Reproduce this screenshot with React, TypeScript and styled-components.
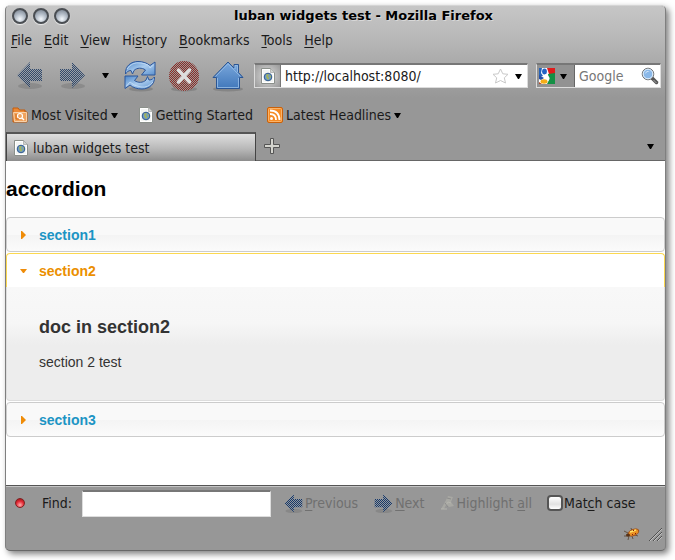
import React, { useState } from "react";
import styled, { createGlobalStyle } from "styled-components";

const GlobalStyle = createGlobalStyle`
  *, *::before, *::after { box-sizing: border-box; }
  body { margin: 0; background: #fff; }
  button, input { font: inherit; color: inherit; margin: 0; }
`;

const Page = styled.div`
  display: flex;
  min-height: 100vh;
  padding: 5px 9px 9px 5px;
  font: 14px/18px "DejaVu Sans Condensed", "DejaVu Sans", sans-serif;
  color: #1a1a1a;
`;

const Window = styled.div`
  flex: 1;
  min-width: 0;
  display: flex;
  flex-direction: column;
  border: 1px solid #7f7f7f;
  border-top-color: #d5d5d5;
  border-bottom-color: #686868;
  border-radius: 5px;
  background: #979797;
  box-shadow: 3px 3px 6px rgba(0, 0, 0, 0.5);
  white-space: nowrap;
`;

const Chrome = styled.header`
  border-radius: 4px 4px 0 0;
  background: linear-gradient(#c6c6c6 0, #b9b9b9 30px, #979797 92px);
`;

const TitleBar = styled.div`
  display: flex;
  align-items: center;
  height: 20px;
  padding: 0 8px 0 6px;
`;

const WindowButtons = styled.div`
  display: flex;
  gap: 5px;
`;

const WindowButton = styled.button`
  width: 16px;
  height: 16px;
  padding: 0;
  border: 2px solid #4a4e53;
  border-radius: 50%;
  background: radial-gradient(circle at 50% 75%, #f4f8fc 0, #b5bec9 45%, #707a87 100%);
  box-shadow: 0 1px 1px #eee;
`;

const Title = styled.h1`
  flex: 1;
  margin: 0;
  text-align: center;
  font-family: "DejaVu Sans", sans-serif;
  font-size: 13px;
  line-height: 20px;
  font-weight: bold;
  color: #000;
  text-shadow: 1px 1px 0 #d8d8d8;
`;

const MenuBar = styled.nav`
  display: flex;
  gap: 12px;
  height: 27px;
  align-items: center;
  padding-left: 5px;
`;

const PlainButton = styled.button`
  display: flex;
  align-items: center;
  flex: none;
  padding: 0;
  border: 0;
  background: none;
  white-space: pre;
`;

const MenuButton = styled(PlainButton)`
  display: block;
`;

const Key = styled.span`
  text-decoration: underline;
  text-decoration-thickness: 1px;
  text-underline-offset: 2px;
`;

const Toolbar = styled.div`
  display: flex;
  align-items: center;
  height: 45px;
  padding: 0 4px 0 10px;
`;

const NavButtons = styled.div<{ $gap: number; $after: number }>`
  display: flex;
  flex: none;
  align-items: center;
  gap: ${(p) => p.$gap}px;
  margin-right: ${(p) => p.$after}px;
`;

const Field = styled.div`
  display: flex;
  align-items: center;
  height: 25px;
  background: #fff;
  border: 1px solid #dcdcdc;
  border-top: 2px solid #777;
  padding-right: 5px;
`;

const LocationField = styled(Field)`
  flex: 1;
  min-width: 0;
  margin-right: 8px;
`;

const SearchField = styled(Field)`
  flex: none;
  width: 125px;
  padding-right: 1px;
`;

const FieldInput = styled.input`
  flex: 1;
  min-width: 0;
  width: 40px;
  padding: 0 4px;
  border: 0;
  outline: 0;
  background: none;
  &::placeholder { color: #777; opacity: 1; }
`;

const SiteBadge = styled.button`
  display: flex;
  align-items: center;
  justify-content: center;
  width: 26px;
  height: 22px;
  padding: 0;
  border: 0;
  border-right: 1px solid #777;
  background: radial-gradient(circle, #ddd, #999);
`;

const AddressList = styled(PlainButton)`
  margin-left: 6px;
`;

const EngineButton = styled.button`
  display: flex;
  align-items: center;
  gap: 5px;
  width: 38px;
  height: 22px;
  padding: 0 0 0 2px;
  border: 0;
  border-right: 1px solid #666;
  background: #929292;
`;

const BookmarkBar = styled.nav`
  display: flex;
  align-items: center;
  gap: 14px;
  height: 34px;
  padding-left: 6px;
`;

const Bookmark = styled.a<{ $menu?: boolean }>`
  display: flex;
  align-items: center;
  gap: 3px;
  padding-right: ${(p) => (p.$menu ? "7px" : "0")};
  color: #1a1a1a;
  text-decoration: none;
`;

const TabBar = styled.div`
  display: flex;
  align-items: stretch;
  height: 29px;
  border-bottom: 1px solid #666;
`;

const Tab = styled.button`
  display: flex;
  align-items: center;
  gap: 5px;
  width: 250px;
  height: 29px;
  padding: 0 7px;
  border: 1px solid #444;
  border-top: 2px solid #555;
  border-bottom: 0;
  background: linear-gradient(#dedede, #b8b8b8 55%, #8d8d8d);
`;

const NewTab = styled(PlainButton)`
  margin-left: 8px;
`;

const TabList = styled(PlainButton)`
  margin-left: auto;
  padding-right: 11px;
`;

const Content = styled.main`
  flex: 1;
  background: #fff;
  font-family: "Liberation Sans", Arial, sans-serif;
  font-size: 14px;
  color: #333;
`;

const Heading = styled.h2`
  margin: 0;
  padding: 14px 0 15px;
  font-size: 21px;
  line-height: 27px;
  color: #000;
`;

const Accordion = styled.div`
  display: grid;
  gap: 1px;
`;

const SectionTitle = styled.h3`
  margin: 0;
  font-size: 14px;
`;

const SectionButton = styled.button<{ $open: boolean }>`
  display: flex;
  align-items: center;
  width: 100%;
  height: ${(p) => (p.$open ? "34px" : "35px")};
  padding: 0 13px;
  gap: 12px;
  border: 1px solid ${(p) => (p.$open ? "#fbd850" : "#ccc")};
  border-bottom-width: ${(p) => (p.$open ? "0" : "1px")};
  border-radius: ${(p) => (p.$open ? "4px 4px 0 0" : "4px")};
  background: ${(p) => (p.$open ? "#fff" : "linear-gradient(#f9f9f9 50%, #f4f4f4 52%, #fbfbfb)")};
  color: ${(p) => (p.$open ? "#eb8f00" : "#1c94c4")};
`;

const SectionBody = styled.div`
  padding: 29px 32px 29px;
  border: 1px solid #ddd;
  border-top: 0;
  border-radius: 0 0 4px 4px;
  background: linear-gradient(#f8f8f8 0, #f6f6f6 36px, #ededed 58px, #ededed 100%);
`;

const DocTitle = styled.h4`
  margin: 0 0 14px;
  font-size: 18px;
  line-height: 23px;
`;

const DocText = styled.p`
  margin: 0;
  line-height: 18px;
`;

const FindBar = styled.div`
  display: flex;
  align-items: center;
  height: 36px;
  padding: 0 8px 1px 9px;
  border-top: 1px solid #555;
  box-shadow: inset 0 1px 0 #c5c5c5;
`;

const CloseFind = styled.button`
  flex: none;
  width: 10px;
  height: 10px;
  margin-right: 17px;
  padding: 0;
  border: 1px solid #7d2222;
  border-radius: 50%;
  background: radial-gradient(circle at 50% 75%, #ffb0b0, #e62c38 50%, #8e1010);
`;

const FindLabel = styled.label`
  display: flex;
  align-items: center;
  gap: 10px;
  margin-right: 13px;
`;

const FindInput = styled.input`
  width: 189px;
  height: 27px;
  padding: 0 4px;
  border: 1px solid #ddd;
  border-top: 2px solid #777;
  outline: 0;
  background: #fff;
`;

const FindActions = styled.div`
  display: flex;
  align-items: center;
  gap: 16px;
`;

const FindAction = styled(PlainButton)`
  gap: 2px;
  color: #707070;
`;

const MatchLabel = styled.label`
  display: flex;
  align-items: center;
  gap: 1px;
  margin-left: 15px;
`;

const Check = styled.input`
  appearance: none;
  width: 16px;
  height: 16px;
  border: 2px solid #555;
  border-radius: 4px;
  background: linear-gradient(#fff, #e2e2e2 60%, #fff);
  &:checked { background: #555; }
`;

const StatusBar = styled.footer`
  display: flex;
  align-items: center;
  justify-content: flex-end;
  gap: 8px;
  height: 29px;
  padding: 0 3px 4px 0;
`;

const Caret = () => (
  <svg width="7" height="5" viewBox="0 0 7 5" aria-hidden="true">
    <path d="M0 0H7L4 5H3Z" fill="#000" />
  </svg>
);

const PageIcon = () => (
  <svg width="14" height="16" viewBox="0 0 14 16" aria-hidden="true">
    <path d="M.5 .5H9.500L13.500 4.500V15.500H.5Z" fill="#f3f5f3" stroke="#8b908b" />
    <path d="M1.500 1.500H9V5H12.500V14.500H1.500Z" fill="none" stroke="#fff" />
    <path d="M9.500 .5V4.500H13.500" fill="#cfd2cf" stroke="#999" strokeWidth=".6" />
    <circle cx="7" cy="9" r="3.800" fill="#6d9bc9" stroke="#31598c" />
    <path d="M5 6.500 8 6 7 8.500 8.500 10 7 12 5.500 10ZM8.500 7 10 8 10 10 9 9Z" fill="#a3b35b" />
  </svg>
);

type ArrowProps = { size: number; right?: boolean; flip?: boolean; id: string };

const DitheredArrow = ({ size, right, flip, id }: ArrowProps) => {
  const scale = 27 / size;
  const cell = 2 * scale;
  const shape = right ? "M1 7H13V0L26 13.5 13 26V19H1Z" : "M26 7H14V0L1 13.5 14 26V19H26Z";
  const checks = flip
    ? `M${scale} 0H${cell}V${scale}H${scale}ZM0 ${scale}H${scale}V${cell}H0Z`
    : `M0 0H${scale}V${scale}H0ZM${scale} ${scale}H${cell}V${cell}H${scale}Z`;
  return (
    <svg width={size} height={size} viewBox="0 0 27 27" aria-hidden="true">
      <defs>
        <pattern id={id} width={cell} height={cell} patternUnits="userSpaceOnUse">
          <path d={checks} fill={size < 20 ? "#173768" : "#33496a"} shapeRendering="crispEdges" />
        </pattern>
      </defs>
      <ellipse cx="14" cy="24" rx="12" ry="3" fill="#777" opacity=".5" />
      <path d={shape} fill="#8d9aab" opacity=".4" />
      <path d={shape} fill={`url(#${id})`} />
    </svg>
  );
};

const ReloadIcon = () => (
  <svg width="32" height="32" viewBox="0 0 32 32" aria-hidden="true">
    <defs>
      <linearGradient id="reload" x1="0" y1="0" x2="1" y2="1">
        <stop offset="0" stopColor="#4d86c8" />
        <stop offset=".5" stopColor="#a9cbee" />
        <stop offset="1" stopColor="#5c91ce" />
      </linearGradient>
    </defs>
    <ellipse cx="17" cy="29" rx="12" ry="2.5" fill="#777" opacity=".6" />
    <g fill="url(#reload)" stroke="#2b569c" strokeLinejoin="round">
      <path d="M1.5 14C1 6 7 1.5 14 1.5C19 1.5 23 3 26 5.5L31 2V15H17.5L21.500 10C18 7.500 13 7.500 10 10.500L8.500 14L7 10.500C4 10.500 3 12 1.500 14Z" />
      <path d="M30.500 17C31 24 25 29 18 29C13 29 9 27.500 6 25L1 28.500V16H14L10.500 20.500C14 23 19 23 22 20L23.500 16.500L25 20C28 20 29 18.500 30.500 17Z" />
    </g>
    <path d="M3 9Q8 1.500 17 3T26 8L29.500 5M29 22Q24 28 17 27T6 22L2.500 26" fill="none" stroke="#c8e0f7" strokeWidth=".8" />
  </svg>
);

const StopIcon = () => (
  <svg width="32" height="32" viewBox="0 0 32 32" aria-hidden="true">
    <defs>
      <pattern id="stop" width="2" height="2" patternUnits="userSpaceOnUse">
        <path d="M1 0H2V1H1ZM0 1H1V2H0Z" fill="#8e2a24" shapeRendering="crispEdges" />
      </pattern>
    </defs>
    <ellipse cx="16" cy="29" rx="13" ry="2.500" fill="#777" opacity=".6" />
    <circle cx="16" cy="16" r="15" fill="#999" />
    <circle cx="16" cy="16" r="15" fill="url(#stop)" />
    <path d="M10.500 10 21.500 22M21.500 10 10.500 22" stroke="#dedede" strokeWidth="3.500" strokeLinecap="round" />
  </svg>
);

const HomeIcon = () => (
  <svg width="32" height="32" viewBox="0 0 32 32" aria-hidden="true">
    <defs>
      <linearGradient id="home" x1="0" y1="0" x2="0" y2="1">
        <stop offset="0" stopColor="#7ba8dc" />
        <stop offset="1" stopColor="#4178bb" />
      </linearGradient>
    </defs>
    <ellipse cx="16" cy="29" rx="15" ry="2.500" fill="#777" opacity=".6" />
    <path d="M16 2 22 8V4.500H26.500V12.500L31 17.500H27.500V28.500H4.500V17.500H1Z" fill="url(#home)" stroke="#2a5593" strokeLinejoin="round" />
    <path d="M3.500 16.500 16 3.800 28.500 16.500M5.500 18V27.500H26.500V18M23 9V5.500H25.500V12" fill="none" stroke="#9ac0e8" strokeWidth=".8" />
  </svg>
);

const StarIcon = () => (
  <svg width="17" height="16" viewBox="0 0 17 16" aria-hidden="true">
    <path d="M8.500 1 10.800 5.800 16 6.300 12.300 9.800 13.500 15 8.500 12.500 3.500 15 4.700 9.800 1 6.300 6.200 5.800Z" fill="#fff" stroke="#c9c9c9" strokeLinejoin="round" />
  </svg>
);

const EngineIcon = () => (
  <svg width="16" height="16" viewBox="0 0 16 16" aria-hidden="true">
    <rect width="16" height="16" fill="#fff" />
    <path d="M8 0H16V6H10Z" fill="#e01b1b" />
    <path d="M9 6 16 5V16H8L10 12Z" fill="#149045" />
    <path d="M0 0H3L2 5 4 8 0 9Z" fill="#2463b9" />
    <path d="M0 7 5 10 2 12 0 11Z" fill="#244fa8" />
    <ellipse cx="5.500" cy="3.500" rx="2.400" ry="3" fill="#2463c4" />
    <path d="M6 7Q12 10 8 12" fill="none" stroke="#fff" strokeWidth="2" />
    <ellipse cx="5" cy="13.500" rx="3.500" ry="2.200" fill="#f4ad16" />
    <path d="M0 14V16H3Z" fill="#b94a24" />
  </svg>
);

const SearchIcon = () => (
  <svg width="18" height="18" viewBox="0 0 18 18" aria-hidden="true">
    <path d="M11 11 15.500 15.500" stroke="#555" strokeWidth="3.500" strokeLinecap="round" />
    <path d="M12.500 13 15.500 16" stroke="#aaa" strokeWidth="1" />
    <circle cx="7" cy="7" r="5.800" fill="#8ab8e8" stroke="#777" />
    <circle cx="7" cy="7" r="4.800" fill="none" stroke="#e5f0fa" />
    <path d="M4 7Q5 3.500 8.500 4Q5 5 4 7" fill="#fff" />
  </svg>
);

const FolderIcon = () => (
  <svg width="16" height="16" viewBox="0 0 16 16" aria-hidden="true">
    <path d="M1 15V1H6L7.500 3H13V5H15V15Z" fill="#ec8a36" stroke="#c35c0c" />
    <path d="M1.500 5.500H14.500V14.500H2.500Z" fill="#f1a35d" stroke="#f8d2aa" />
    <circle cx="8" cy="9" r="2.500" fill="none" stroke="#fff" strokeWidth="1.200" />
    <path d="M10 11 12 13" stroke="#fff" strokeWidth="1.500" />
    <path d="M4 7V12H7" fill="none" stroke="#d6690e" />
  </svg>
);

const FeedIcon = () => (
  <svg width="16" height="16" viewBox="0 0 16 16" aria-hidden="true">
    <rect x=".5" y=".5" width="15" height="15" rx="1.500" fill="#f68b24" stroke="#c9610b" />
    <rect x="1.500" y="1.500" width="13" height="13" rx="1" fill="none" stroke="#fab46b" />
    <circle cx="4.500" cy="11.500" r="1.500" fill="#fff" />
    <path d="M3 7Q9 7 9 13M3 3.500Q12.500 3.500 12.500 13" fill="none" stroke="#fff" strokeWidth="1.800" />
  </svg>
);

const PlusIcon = () => (
  <svg width="16" height="16" viewBox="0 0 16 16" aria-hidden="true">
    <path d="M6.500 .5H9.500V6.500H15.500V9.500H9.500V15.500H6.500V9.500H.5V6.500H6.500Z" fill="#d4d4ce" stroke="#555" />
  </svg>
);

const Chevron = ({ open }: { open: boolean }) => (
  <svg width="7" height="8" viewBox="0 0 7 8" aria-hidden="true">
    <path d={open ? "M0 2H7L4 6H3Z" : "M1 0H2L6 4 2 8H1Z"} fill="#ef8c08" />
  </svg>
);

const HighlightIcon = () => (
  <svg width="14" height="16" viewBox="0 0 14 16" aria-hidden="true">
    <path d="M1 14 5 7 8 1 13 2 11 7 14 11 9 12 6 10 4 14Z" fill="#a8a8a3" />
    <path d="M6 10 8 7 11 8M1 14H7" fill="none" stroke="#b5b5ae" />
    <path d="M7 3 11 4M5 8 8 12" stroke="#8c8c8c" />
  </svg>
);

const BugIcon = () => (
  <svg width="16" height="14" viewBox="0 0 16 14" aria-hidden="true">
    <path d="M0 4 4 6M0 9H5M4 13 5 9M9 12 8 9M14 9 11 8M7 1 8 4" stroke="#554330" strokeWidth=".8" />
    <ellipse cx="9.500" cy="5.500" rx="5.500" ry="3" fill="#eb9223" stroke="#a54d12" transform="rotate(-22 9.500 5.500)" />
    <path d="M6 5 12 3" stroke="#ffe369" strokeWidth="1.500" />
    <ellipse cx="4" cy="8" rx="2" ry="1.500" fill="#5b3214" />
    <path d="M8 7 9 8M11 6 12 7M9 3 10 4" stroke="#821d0c" />
  </svg>
);

const GripIcon = () => (
  <svg width="14" height="14" viewBox="0 0 14 14" aria-hidden="true">
    <path d="M1 14 14 1M5 14 14 5M9 14 14 9" stroke="#505050" />
    <path d="M2 14 14 2M6 14 14 6M10 14 14 10" stroke="#d0d0d0" strokeWidth=".7" />
  </svg>
);

const menus: [string, string, string][] = [
  ["", "F", "ile"],
  ["", "E", "dit"],
  ["", "V", "iew"],
  ["Hi", "s", "tory"],
  ["", "B", "ookmarks"],
  ["", "T", "ools"],
  ["", "H", "elp"],
];

export default function App() {
  const [open, setOpen] = useState("section2");
  const [url, setUrl] = useState("http://localhost:8080/");

  return (
    <Page>
      <GlobalStyle />
      <Window>
        <Chrome>
          <TitleBar>
            <WindowButtons>
              <WindowButton aria-label="Close" />
              <WindowButton aria-label="Minimize" />
              <WindowButton aria-label="Maximize" />
            </WindowButtons>
            <Title>luban widgets test - Mozilla Firefox</Title>
          </TitleBar>
          <MenuBar>
            {menus.map(([before, key, after]) => (
              <MenuButton key={key}>
                {before}
                <Key>{key}</Key>
                {after}
              </MenuButton>
            ))}
          </MenuBar>
          <Toolbar>
            <NavButtons $gap={16} $after={15}>
              <PlainButton aria-label="Back"><DitheredArrow size={27} flip id="back" /></PlainButton>
              <PlainButton aria-label="Forward"><DitheredArrow size={27} right id="forward" /></PlainButton>
              <PlainButton aria-label="History list"><Caret /></PlainButton>
            </NavButtons>
            <NavButtons $gap={12} $after={10}>
              <PlainButton aria-label="Reload"><ReloadIcon /></PlainButton>
              <PlainButton aria-label="Stop"><StopIcon /></PlainButton>
              <PlainButton aria-label="Home"><HomeIcon /></PlainButton>
            </NavButtons>
            <LocationField>
              <SiteBadge aria-label="Site identity"><PageIcon /></SiteBadge>
              <FieldInput aria-label="Address" value={url} onChange={(e) => setUrl(e.target.value)} />
              <PlainButton aria-label="Bookmark this page"><StarIcon /></PlainButton>
              <AddressList aria-label="Address list"><Caret /></AddressList>
            </LocationField>
            <SearchField>
              <EngineButton aria-label="Search engine"><EngineIcon /><Caret /></EngineButton>
              <FieldInput aria-label="Search" placeholder="Google" />
              <PlainButton aria-label="Search"><SearchIcon /></PlainButton>
            </SearchField>
          </Toolbar>
          <BookmarkBar>
            <Bookmark href="#visited" $menu><FolderIcon />Most Visited<Caret /></Bookmark>
            <Bookmark href="#start"><PageIcon />Getting Started</Bookmark>
            <Bookmark href="#headlines" $menu><FeedIcon />Latest Headlines<Caret /></Bookmark>
          </BookmarkBar>
          <TabBar>
            <Tab><PageIcon />luban widgets test</Tab>
            <NewTab aria-label="New tab"><PlusIcon /></NewTab>
            <TabList aria-label="List all tabs"><Caret /></TabList>
          </TabBar>
        </Chrome>
        <Content>
          <Heading>accordion</Heading>
          <Accordion>
            {["section1", "section2", "section3"].map((name) => (
              <section key={name}>
                <SectionTitle>
                  <SectionButton
                    $open={open === name}
                    aria-expanded={open === name}
                    onClick={() => setOpen(name)}
                  >
                    <Chevron open={open === name} />
                    {name}
                  </SectionButton>
                </SectionTitle>
                {open === name && (
                  <SectionBody>
                    <DocTitle>doc in {name}</DocTitle>
                    <DocText>section {name.slice(-1)} test</DocText>
                  </SectionBody>
                )}
              </section>
            ))}
          </Accordion>
        </Content>
        <FindBar>
          <CloseFind aria-label="Close find bar" />
          <FindLabel>Find:<FindInput type="text" /></FindLabel>
          <FindActions>
            <FindAction disabled><DitheredArrow size={19} id="prev" /><span><Key>P</Key>revious</span></FindAction>
            <FindAction disabled><DitheredArrow size={19} right id="next" /><span><Key>N</Key>ext</span></FindAction>
            <FindAction disabled><HighlightIcon /><span>Highlight <Key>a</Key>ll</span></FindAction>
          </FindActions>
          <MatchLabel><Check type="checkbox" /><span>Mat<Key>c</Key>h case</span></MatchLabel>
        </FindBar>
        <StatusBar>
          <PlainButton aria-label="Firebug"><BugIcon /></PlainButton>
          <GripIcon />
        </StatusBar>
      </Window>
    </Page>
  );
}
